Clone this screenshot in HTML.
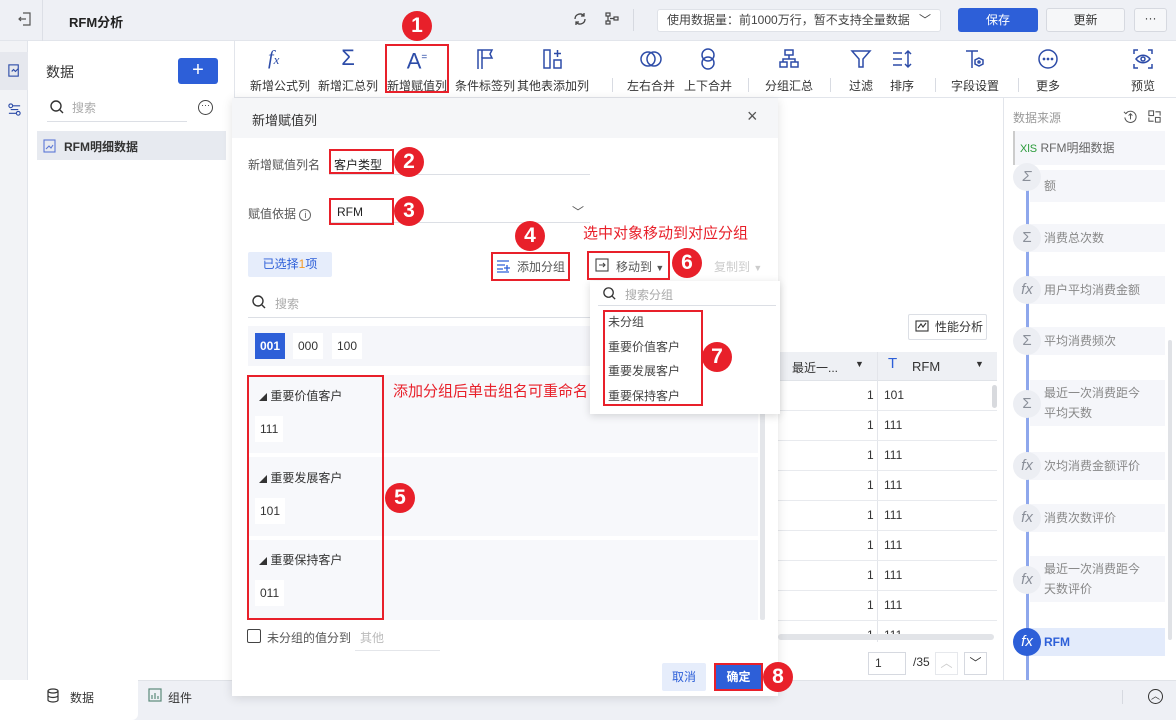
<!DOCTYPE html>
<html><head><meta charset="utf-8"><style>
*{box-sizing:border-box;margin:0;padding:0}
body{width:1176px;height:720px;position:relative;overflow:hidden;background:#fff;font-family:"Liberation Sans","Noto Sans CJK SC",sans-serif;font-size:12px;color:#333}
.a{position:absolute}
.c{position:absolute;width:30px;height:30px;border-radius:50%;background:#e8202a;color:#fff;font-size:21px;font-weight:bold;text-align:center;line-height:30px}
.rb{position:absolute;border:2px solid #e8202a}
.tb{position:absolute;top:77px;font-size:12px;color:#333;text-align:center;width:80px;margin-left:-40px}
.ti{position:absolute;top:47px;width:24px;height:24px;margin-left:-12px;color:#2d4ca8}
.sep{position:absolute;top:78px;width:1px;height:14px;background:#d8dbe2}
.row{position:absolute;left:778px;width:219px;height:30px;border-bottom:1px solid #e8eaee;font-size:12px}
.ri{position:absolute;left:1013px;width:28px;height:28px;border-radius:50%;background:#eceef3;color:#8a8f99;text-align:center;line-height:28px;font-size:15px;font-style:italic}
.rc{position:absolute;left:1030px;width:135px;background:#f5f6fa;color:#888;font-size:12px;padding-left:14px;line-height:20px}
.grp{position:absolute;left:248px;width:510px;background:#f7f8fb}
.chip{position:absolute;background:#fff;padding:0 5px;line-height:26px;font-size:12px}
</style></head><body>
<div class="a" style="left:0;top:0;width:1176px;height:41px;background:#eef0f5;border-bottom:1px solid #e2e5eb"></div>
<div class="a" style="left:42px;top:0;width:1px;height:41px;background:#dcdfe6"></div>
<svg class="a" style="left:17px;top:11px" width="16" height="16" viewBox="0 0 16 16" fill="none" stroke="#555" stroke-width="1.2"><path d="M6 2h7v12H6M2 8h7M4 6l-2 2 2 2"/></svg>
<div class="a" style="left:69px;top:12px;font-weight:bold;font-size:13px;color:#222">RFM分析</div>
<svg class="a" style="left:572px;top:11px" width="16" height="16" viewBox="0 0 16 16" fill="none" stroke="#444" stroke-width="1.3"><path d="M13 8a5 5 0 0 1-9 3M3 8a5 5 0 0 1 9-3"/><path d="M12 2v3h-3M4 14v-3h3"/></svg>
<svg class="a" style="left:604px;top:11px" width="16" height="16" viewBox="0 0 16 16" fill="none" stroke="#444" stroke-width="1.2"><rect x="2" y="2" width="4" height="3"/><rect x="2" y="10" width="4" height="3"/><rect x="10" y="6" width="4" height="3"/><path d="M4 5v5M6 7.5h4"/></svg>
<div class="a" style="left:633px;top:9px;width:1px;height:22px;background:#d6d9e0"></div>
<div class="a" style="left:657px;top:9px;width:284px;height:23px;background:#fff;border:1px solid #dfe2e8;border-radius:3px;padding-left:9px;line-height:21px;color:#444">使用数据量：前1000万行，暂不支持全量数据<span style="position:absolute;right:9px;top:0">﹀</span></div>
<div class="a" style="left:958px;top:8px;width:80px;height:24px;background:#2d5fd8;border-radius:3px;color:#fff;text-align:center;line-height:24px">保存</div>
<div class="a" style="left:1046px;top:8px;width:79px;height:24px;background:#f6f7f9;border:1px solid #d6d9e0;border-radius:3px;text-align:center;line-height:22px">更新</div>
<div class="a" style="left:1134px;top:8px;width:33px;height:24px;background:#f6f7f9;border:1px solid #d6d9e0;border-radius:3px;text-align:center;line-height:18px">···</div>
<div class="a" style="left:0;top:41px;width:28px;height:639px;background:#f2f3f6;border-right:1px solid #e2e5eb"></div>
<div class="a" style="left:0;top:52px;width:28px;height:38px;background:#e6e8ee"></div>
<svg class="a" style="left:7px;top:63px" width="15" height="15" viewBox="0 0 16 16" fill="none" stroke="#2d4ca8" stroke-width="1.2"><rect x="2" y="2" width="10" height="12"/><path d="M5 9l2-2 2 2 3-3"/></svg>
<svg class="a" style="left:7px;top:102px" width="15" height="15" viewBox="0 0 16 16" fill="none" stroke="#2d4ca8" stroke-width="1.2"><circle cx="4" cy="4" r="2"/><circle cx="12" cy="12" r="2"/><path d="M6 4h8M2 12h8M4 8h8"/></svg>
<div class="a" style="left:234px;top:41px;width:1px;height:639px;background:#e2e5eb"></div>
<div class="a" style="left:46px;top:62px;font-size:14px;color:#333">数据</div>
<div class="a" style="left:178px;top:58px;width:40px;height:26px;background:#2d5fd8;border-radius:3px;color:#fff;font-size:20px;text-align:center;line-height:25px">+</div>
<svg class="a" style="left:49px;top:99px" width="16" height="16" viewBox="0 0 16 16" fill="none" stroke="#333" stroke-width="1.4"><circle cx="7" cy="7" r="5"/><path d="M11 11l3 3"/></svg>
<div class="a" style="left:72px;top:99px;color:#aaa">搜索</div>
<div class="a" style="left:47px;top:121px;width:140px;height:1px;background:#dcdfe5"></div>
<div class="a" style="left:198px;top:100px;width:15px;height:15px;border:1.2px solid #444;border-radius:50%;font-size:9px;text-align:center;line-height:8px">···</div>
<div class="a" style="left:37px;top:131px;width:189px;height:29px;background:#e7eaf0"></div>
<svg class="a" style="left:43px;top:139px" width="13" height="14" viewBox="0 0 13 14" fill="none" stroke="#5b77d6" stroke-width="1.1"><rect x="1" y="1" width="11" height="12"/><path d="M3 10l3-3 2 2 2-3"/></svg>
<div class="a" style="left:64px;top:138px;font-weight:bold;color:#333">RFM明细数据</div>
<div class="a" style="left:235px;top:97px;width:941px;height:1px;background:#e2e5eb"></div>
<div class="ti" style="left:280px;font-style:italic;font-family:'Liberation Serif',serif;font-size:20px;color:#2d4ca8">f<span style="font-size:13px">x</span></div>
<div class="ti" style="left:348px;font-size:22px;text-align:center;line-height:22px">Σ</div>
<div class="ti" style="left:417px;font-size:22px;text-align:center;line-height:22px">A<sup style="font-size:10px">=</sup></div>
<svg class="ti" style="left:485px" viewBox="0 0 24 24" fill="none" stroke="#2d4ca8" stroke-width="1.5"><path d="M5 22V3h14l-2 4 2 4H9v11"/><path d="M9 3v8" /></svg>
<svg class="ti" style="left:553px" viewBox="0 0 24 24" fill="none" stroke="#2d4ca8" stroke-width="1.5"><rect x="3" y="3" width="6" height="18"/><rect x="13" y="13" width="7" height="8"/><path d="M16.5 3v7M13 6.5h7"/></svg>
<svg class="ti" style="left:651px" viewBox="0 0 24 24" fill="none" stroke="#2d4ca8" stroke-width="1.5"><circle cx="9" cy="12" r="7"/><circle cx="15" cy="12" r="7"/></svg>
<svg class="ti" style="left:708px" viewBox="0 0 24 24" fill="none" stroke="#2d4ca8" stroke-width="1.5"><circle cx="12" cy="8" r="6"/><circle cx="12" cy="16" r="6"/></svg>
<svg class="ti" style="left:789px" viewBox="0 0 24 24" fill="none" stroke="#2d4ca8" stroke-width="1.5"><rect x="8" y="3" width="8" height="5"/><rect x="3" y="15" width="7" height="5"/><rect x="14" y="15" width="7" height="5"/><path d="M12 8v4M6 15v-3h12v3"/></svg>
<svg class="ti" style="left:861px" viewBox="0 0 24 24" fill="none" stroke="#2d4ca8" stroke-width="1.5"><path d="M3 4h18l-7 8v8h-4v-8z"/></svg>
<svg class="ti" style="left:902px" viewBox="0 0 24 24" fill="none" stroke="#2d4ca8" stroke-width="1.5"><path d="M3 6h9M3 12h9M3 18h9M18 4v16M15 7l3-3 3 3M15 17l3 3 3-3"/></svg>
<svg class="ti" style="left:975px" viewBox="0 0 24 24" fill="none" stroke="#2d4ca8" stroke-width="1.5"><path d="M3 4h12M9 4v17"/><path d="M16 11l4 2v4l-4 2-4-2v-4z"/><circle cx="16" cy="15" r="1"/></svg>
<svg class="ti" style="left:1048px" viewBox="0 0 24 24" fill="none" stroke="#2d4ca8" stroke-width="1.5"><circle cx="12" cy="12" r="9"/><circle cx="8" cy="12" r=".6"/><circle cx="12" cy="12" r=".6"/><circle cx="16" cy="12" r=".6"/></svg>
<svg class="ti" style="left:1143px" viewBox="0 0 24 24" fill="none" stroke="#2d4ca8" stroke-width="1.5"><path d="M3 7V3h4M17 3h4v4M21 17v4h-4M7 21H3v-4"/><path d="M5 12c4-5 10-5 14 0c-4 5-10 5-14 0z"/><circle cx="12" cy="12" r="2"/></svg>
<div class="tb" style="left:280px">新增公式列</div>
<div class="tb" style="left:348px">新增汇总列</div>
<div class="tb" style="left:417px">新增赋值列</div>
<div class="tb" style="left:485px">条件标签列</div>
<div class="tb" style="left:553px">其他表添加列</div>
<div class="sep" style="left:612px"></div>
<div class="tb" style="left:651px">左右合并</div>
<div class="tb" style="left:708px">上下合并</div>
<div class="sep" style="left:748px"></div>
<div class="tb" style="left:789px">分组汇总</div>
<div class="sep" style="left:830px"></div>
<div class="tb" style="left:861px">过滤</div>
<div class="tb" style="left:902px">排序</div>
<div class="sep" style="left:935px"></div>
<div class="tb" style="left:975px">字段设置</div>
<div class="sep" style="left:1018px"></div>
<div class="tb" style="left:1048px">更多</div>
<div class="tb" style="left:1143px">预览</div>
<div class="a" style="left:908px;top:314px;width:79px;height:26px;border:1px solid #dcdfe5;border-radius:2px;line-height:24px;padding-left:26px;font-size:12px">性能分析</div>
<svg class="a" style="left:915px;top:320px" width="14" height="13" viewBox="0 0 14 13" fill="none" stroke="#333" stroke-width="1.1"><rect x="1" y="1" width="12" height="10"/><path d="M3 8l3-4 2 3 3-4"/></svg>
<div class="a" style="left:778px;top:352px;width:219px;height:29px;background:#eef0f4;border-bottom:1px solid #e0e3e8"></div>
<div class="a" style="left:877px;top:352px;width:1px;height:290px;background:#e3e5ea"></div>
<div class="a" style="left:792px;top:359px;color:#333">最近一...</div>
<div class="a" style="left:855px;top:359px;font-size:9px">▼</div>
<div class="a" style="left:888px;top:355px;color:#2d5fd8;font-size:15px">T</div>
<div class="a" style="left:912px;top:359px;font-size:13px">RFM</div>
<div class="a" style="left:975px;top:359px;font-size:9px">▼</div>
<div class="row" style="top:381px"><span class="a" style="left:89px;top:7px">1</span><span class="a" style="left:106px;top:7px">101</span></div>
<div class="row" style="top:411px"><span class="a" style="left:89px;top:7px">1</span><span class="a" style="left:106px;top:7px">111</span></div>
<div class="row" style="top:441px"><span class="a" style="left:89px;top:7px">1</span><span class="a" style="left:106px;top:7px">111</span></div>
<div class="row" style="top:471px"><span class="a" style="left:89px;top:7px">1</span><span class="a" style="left:106px;top:7px">111</span></div>
<div class="row" style="top:501px"><span class="a" style="left:89px;top:7px">1</span><span class="a" style="left:106px;top:7px">111</span></div>
<div class="row" style="top:531px"><span class="a" style="left:89px;top:7px">1</span><span class="a" style="left:106px;top:7px">111</span></div>
<div class="row" style="top:561px"><span class="a" style="left:89px;top:7px">1</span><span class="a" style="left:106px;top:7px">111</span></div>
<div class="row" style="top:591px"><span class="a" style="left:89px;top:7px">1</span><span class="a" style="left:106px;top:7px">111</span></div>
<div class="row" style="top:621px;height:20px;border:0"><span class="a" style="left:89px;top:7px">1</span><span class="a" style="left:106px;top:7px">111</span></div>
<div class="a" style="left:778px;top:634px;width:216px;height:6px;background:#e2e4e8;border-radius:3px"></div>
<div class="a" style="left:992px;top:385px;width:5px;height:23px;background:#d8dade;border-radius:3px"></div>
<div class="a" style="left:868px;top:652px;width:38px;height:23px;border:1px solid #d6d9e0;padding-left:6px;line-height:21px">1</div>
<div class="a" style="left:913px;top:655px">/35</div>
<div class="a" style="left:935px;top:652px;width:23px;height:23px;border:1px solid #e6e8ec;color:#ccc;text-align:center;line-height:21px">︿</div>
<div class="a" style="left:964px;top:652px;width:23px;height:23px;border:1px solid #d6d9e0;text-align:center;line-height:21px">﹀</div>
<div class="a" style="left:1003px;top:98px;width:1px;height:582px;background:#e2e5eb"></div>
<div class="a" style="left:1013px;top:109px;color:#999">数据来源</div>
<svg class="a" style="left:1123px;top:109px" width="15" height="15" viewBox="0 0 16 16" fill="none" stroke="#555" stroke-width="1.1"><path d="M3 5a6 6 0 1 1-1 4"/><path d="M1 3l2 2 2-2M8 11V5M6 7l2-2 2 2"/></svg>
<svg class="a" style="left:1147px;top:109px" width="15" height="15" viewBox="0 0 16 16" fill="none" stroke="#555" stroke-width="1.1"><rect x="2" y="2" width="5" height="5"/><rect x="9" y="9" width="5" height="5"/><path d="M9 3h5v4M7 13H2V9"/></svg>
<div class="a" style="left:1013px;top:131px;width:152px;height:34px;background:#f5f6fa;border-left:2px solid #ccc;padding-left:5px;line-height:34px;color:#666"><span style="color:#2a9b3a;font-size:11px">XlS</span> RFM明细数据</div>
<div class="a" style="left:1026px;top:166px;width:3px;height:514px;background:#8ea7ec"></div>
<div class="rc" style="top:170px;height:32px;padding-top:6px">额</div><div class="ri" style="top:163px">Σ</div>
<div class="rc" style="top:224px;height:28px;padding-top:4px">消费总次数</div><div class="ri" style="top:224px;font-style:normal">Σ</div>
<div class="rc" style="top:276px;height:28px;padding-top:4px">用户平均消费金额</div><div class="ri" style="top:276px">fx</div>
<div class="rc" style="top:327px;height:28px;padding-top:4px">平均消费频次</div><div class="ri" style="top:327px;font-style:normal">Σ</div>
<div class="rc" style="top:380px;height:46px;padding-top:3px">最近一次消费距今<br>平均天数</div><div class="ri" style="top:390px;font-style:normal">Σ</div>
<div class="rc" style="top:452px;height:28px;padding-top:4px">次均消费金额评价</div><div class="ri" style="top:452px">fx</div>
<div class="rc" style="top:504px;height:28px;padding-top:4px">消费次数评价</div><div class="ri" style="top:504px">fx</div>
<div class="rc" style="top:556px;height:46px;padding-top:3px">最近一次消费距今<br>天数评价</div><div class="ri" style="top:566px">fx</div>
<div class="rc" style="top:628px;height:28px;padding-top:4px;background:#e3ebfb;color:#2d5fd8;font-weight:bold">RFM</div><div class="ri" style="top:628px;background:#2d5fd8;color:#fff">fx</div>
<div class="a" style="left:1168px;top:340px;width:4px;height:300px;background:#e0e2e6;border-radius:2px"></div>
<div class="a" style="left:0;top:680px;width:1176px;height:40px;background:#eef0f5;border-top:1px solid #e0e3e8"></div>
<div class="a" style="left:0;top:680px;width:138px;height:40px;background:#fff;border-radius:0 0 6px 0"></div>
<svg class="a" style="left:46px;top:688px" width="14" height="15" viewBox="0 0 14 15" fill="none" stroke="#333" stroke-width="1.2"><ellipse cx="7" cy="3" rx="5" ry="2"/><path d="M2 3v9c0 1 2 2 5 2s5-1 5-2V3M2 7.5c0 1 2 2 5 2s5-1 5-2"/></svg>
<div class="a" style="left:70px;top:689px">数据</div>
<svg class="a" style="left:148px;top:688px" width="14" height="14" viewBox="0 0 14 14" fill="none" stroke="#5b8a7a" stroke-width="1.2"><rect x="1" y="1" width="12" height="12"/><path d="M4 11V7M7 11V5M10 11V8"/></svg>
<div class="a" style="left:168px;top:689px">组件</div>
<div class="a" style="left:1148px;top:689px;width:15px;height:15px;border:1.3px solid #333;border-radius:50%;font-size:9px;text-align:center;line-height:12px">︿</div>
<div class="a" style="left:1122px;top:690px;width:1px;height:14px;background:#d6d9e0"></div>
<div class="a" style="left:232px;top:98px;width:546px;height:598px;background:#fff;box-shadow:0 2px 10px rgba(0,0,0,.12)"></div>
<div class="a" style="left:232px;top:98px;width:546px;height:40px;background:#f5f6f8"></div>
<div class="a" style="left:252px;top:110px;font-size:13px;color:#333">新增赋值列</div>
<div class="a" style="left:747px;top:106px;font-size:18px;color:#555">×</div>
<div class="a" style="left:248px;top:156px;color:#555">新增赋值列名</div>
<div class="a" style="left:329px;top:174px;width:261px;height:1px;background:#dcdfe5"></div>
<div class="a" style="left:334px;top:156px;color:#222">客户类型</div>
<div class="a" style="left:248px;top:205px;color:#555">赋值依据 <span style="display:inline-block;width:12px;height:12px;border:1px solid #666;border-radius:50%;font-size:9px;text-align:center;line-height:10px">i</span></div>
<div class="a" style="left:329px;top:222px;width:261px;height:1px;background:#dcdfe5"></div>
<div class="a" style="left:337px;top:205px;color:#222">RFM</div>
<div class="a" style="left:572px;top:203px;color:#555">﹀</div>
<div class="a" style="left:248px;top:252px;width:84px;height:25px;background:#e6edfb;color:#2d5fd8;text-align:center;line-height:25px;border-radius:2px">已选择<span style="color:#f59a23">1</span>项</div>
<svg class="a" style="left:496px;top:259px" width="14" height="14" viewBox="0 0 14 14" fill="none" stroke="#2d5fd8" stroke-width="1.3"><path d="M1 2h12M1 6h8M1 10h6M1 13h12M11 6v6M8 9h6"/></svg>
<div class="a" style="left:517px;top:258px;color:#555">添加分组</div>
<svg class="a" style="left:595px;top:258px" width="14" height="14" viewBox="0 0 14 14" fill="none" stroke="#444" stroke-width="1.1"><rect x="1" y="1" width="12" height="12"/><path d="M4 7h6M8 5l2 2-2 2"/></svg>
<div class="a" style="left:616px;top:258px;color:#555">移动到 <span style="font-size:9px">▼</span></div>
<div class="a" style="left:714px;top:258px;color:#ccc">复制到 <span style="font-size:9px">▼</span></div>
<svg class="a" style="left:251px;top:294px" width="16" height="16" viewBox="0 0 16 16" fill="none" stroke="#333" stroke-width="1.4"><circle cx="7" cy="7" r="5"/><path d="M11 11l3 3"/></svg>
<div class="a" style="left:275px;top:295px;color:#aaa">搜索</div>
<div class="a" style="left:248px;top:317px;width:520px;height:1px;background:#dcdfe5"></div>
<div class="a" style="left:248px;top:326px;width:512px;height:40px;background:#f5f6fa"></div>
<div class="chip" style="left:255px;top:333px;background:#2d5fd8;color:#fff;font-weight:bold">001</div>
<div class="chip" style="left:293px;top:333px">000</div>
<div class="chip" style="left:332px;top:333px">100</div>
<div class="grp" style="top:375px;height:78px"></div>
<div class="grp" style="top:457px;height:79px"></div>
<div class="grp" style="top:540px;height:80px"></div>
<div class="a" style="left:760px;top:370px;width:5px;height:250px;background:#e4e6ea;border-radius:2px"></div>
<div class="a" style="left:259px;top:387px"><span style="font-size:8px">◢</span> 重要价值客户</div>
<div class="chip" style="left:255px;top:416px">111</div>
<div class="a" style="left:259px;top:469px"><span style="font-size:8px">◢</span> 重要发展客户</div>
<div class="chip" style="left:255px;top:498px">101</div>
<div class="a" style="left:259px;top:551px"><span style="font-size:8px">◢</span> 重要保持客户</div>
<div class="chip" style="left:255px;top:580px">011</div>
<div class="a" style="left:247px;top:629px;width:14px;height:14px;border:1.3px solid #444;border-radius:2px"></div>
<div class="a" style="left:267px;top:629px;color:#555">未分组的值分到</div>
<div class="a" style="left:360px;top:629px;color:#bbb">其他</div>
<div class="a" style="left:355px;top:650px;width:85px;height:1px;background:#e4e6ea"></div>
<div class="a" style="left:662px;top:663px;width:44px;height:28px;background:#e6edfb;color:#2d5fd8;text-align:center;line-height:28px;border-radius:2px">取消</div>
<div class="a" style="left:714px;top:663px;width:49px;height:28px;background:#2d5fd8;color:#fff;text-align:center;line-height:28px;font-weight:bold">确定</div>
<div class="a" style="left:590px;top:281px;width:190px;height:133px;background:#fff;box-shadow:0 2px 8px rgba(0,0,0,.15)"></div>
<svg class="a" style="left:602px;top:286px" width="15" height="15" viewBox="0 0 16 16" fill="none" stroke="#333" stroke-width="1.4"><circle cx="7" cy="7" r="5"/><path d="M11 11l3 3"/></svg>
<div class="a" style="left:625px;top:286px;color:#aaa">搜索分组</div>
<div class="a" style="left:598px;top:305px;width:178px;height:1px;background:#dcdfe5"></div>
<div class="a" style="left:608px;top:310px;color:#444;line-height:24.5px">未分组<br>重要价值客户<br>重要发展客户<br>重要保持客户</div>
<div class="rb" style="left:385px;top:44px;width:64px;height:49px"></div>
<div class="rb" style="left:329px;top:149px;width:65px;height:25px"></div>
<div class="rb" style="left:329px;top:198px;width:65px;height:27px"></div>
<div class="rb" style="left:491px;top:252px;width:79px;height:29px"></div>
<div class="rb" style="left:587px;top:251px;width:83px;height:29px"></div>
<div class="rb" style="left:603px;top:310px;width:100px;height:96px"></div>
<div class="rb" style="left:247px;top:375px;width:137px;height:245px"></div>
<div class="rb" style="left:714px;top:663px;width:49px;height:28px;border-width:2px"></div>
<div class="a" style="left:583px;top:222px;color:#e8202a;font-size:15px">选中对象移动到对应分组</div>
<div class="a" style="left:393px;top:380px;color:#e8202a;font-size:15px">添加分组后单击组名可重命名</div>
<div class="c" style="left:402px;top:11px">1</div>
<div class="c" style="left:394px;top:147px">2</div>
<div class="c" style="left:394px;top:196px">3</div>
<div class="c" style="left:515px;top:221px">4</div>
<div class="c" style="left:385px;top:483px">5</div>
<div class="c" style="left:672px;top:248px">6</div>
<div class="c" style="left:702px;top:342px">7</div>
<div class="c" style="left:763px;top:662px">8</div>
</body></html>
